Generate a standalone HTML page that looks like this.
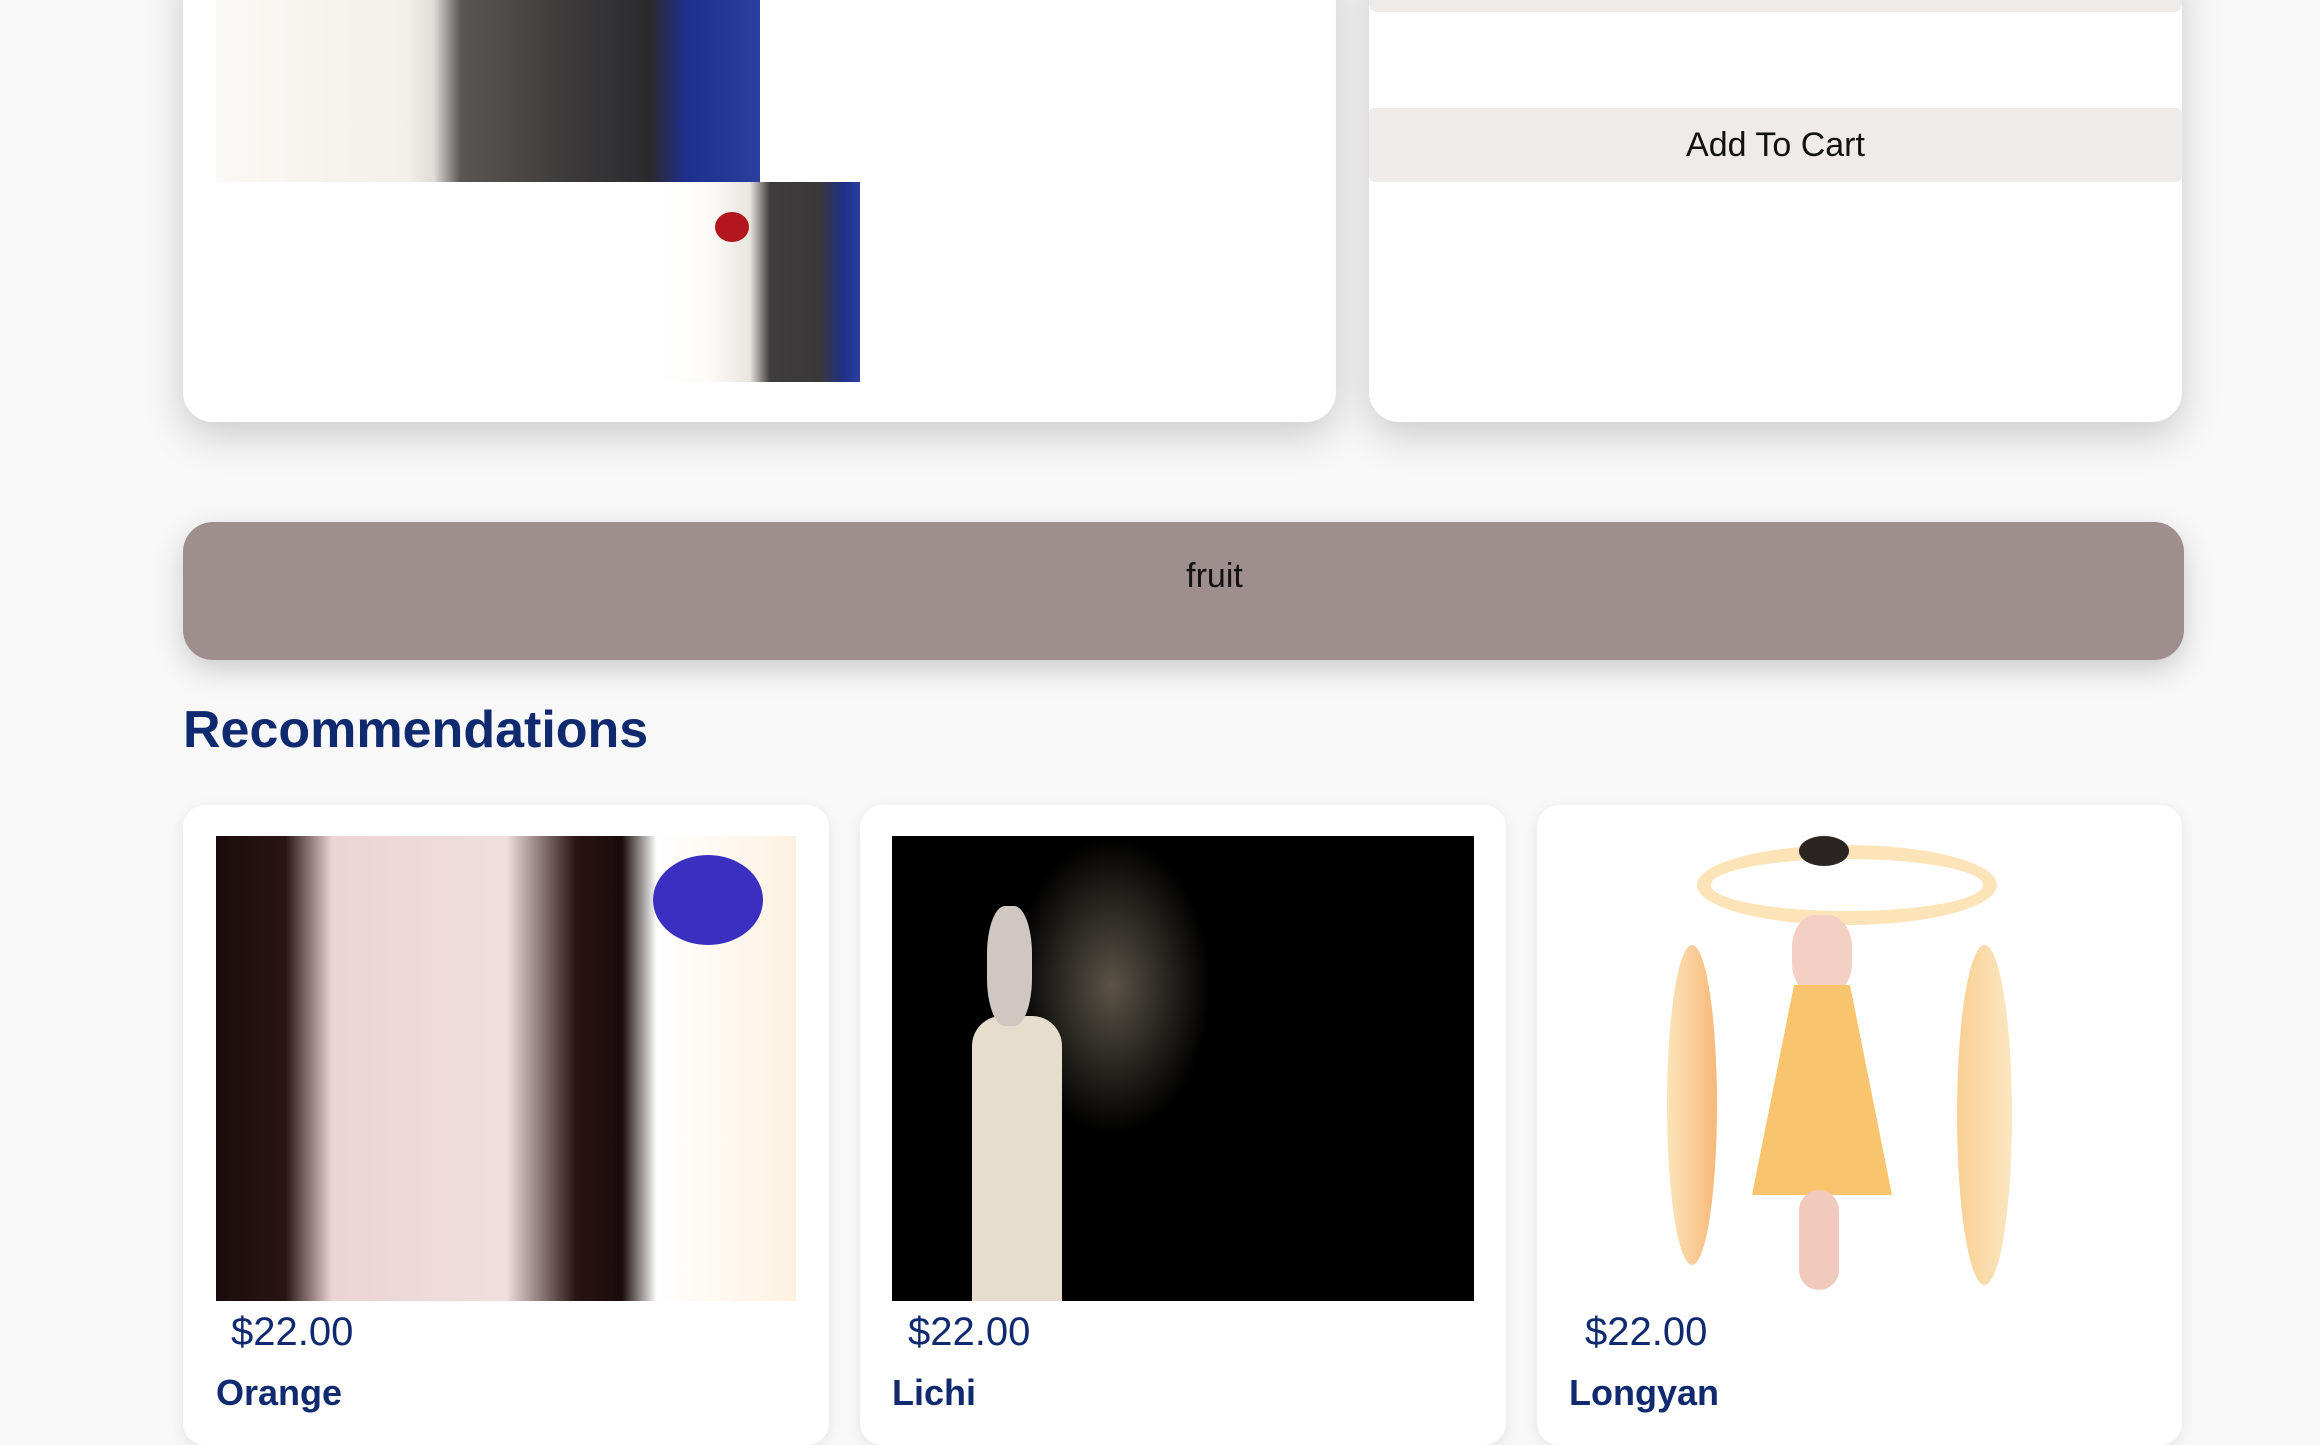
<!DOCTYPE html>
<html><head><meta charset="utf-8"><style>
*{margin:0;padding:0;box-sizing:border-box}
body{width:2320px;height:1408px;overflow:hidden;background:#f8f8f8;font-family:"Liberation Sans",sans-serif;position:relative}
.abs{position:absolute}
.card{background:#fff;border-radius:0 0 30px 30px;box-shadow:0 14px 40px rgba(0,0,0,.18)}
.rc{background:#fff;border-radius:22px;box-shadow:0 4px 14px rgba(0,0,0,.08);overflow:hidden}
.price{font-size:40px;color:#0f2a6e}
.name{font-size:36px;font-weight:bold;color:#0f2a6e}
</style></head><body>
<div class="abs card" style="left:183px;top:-40px;width:1153px;height:462px"></div>
<div class="abs card" style="left:1369px;top:-40px;width:813px;height:462px"></div>
<div class="abs" style="left:216px;top:0;width:544px;height:182px;background:linear-gradient(90deg,#fbf9f5 0%,#f3efea 35%,#e0dcd8 40%,#5a5654 45%,#3c3a3a 65%,#2a2a2e 80%,#1e2f8a 86%,#2b3fa0 100%)"></div>
<div class="abs" style="left:660px;top:182px;width:200px;height:200px;background:linear-gradient(90deg,#fff 0%,#fdfbf8 25%,#e8e4e0 45%,#3e3c3c 55%,#3a3838 80%,#1f2f88 92%,#2b3fa0 100%)"></div>
<div class="abs" style="left:715px;top:212px;width:34px;height:30px;border-radius:50%;background:#b3161c"></div>
<div class="abs" style="left:1369px;top:0;width:813px;height:12px;background:#eeebea;border-radius:0 0 8px 8px"></div>
<div class="abs" style="left:1369px;top:108px;width:813px;height:74px;background:#eeebea;border-radius:6px;display:flex;align-items:center;justify-content:center;font-size:34px;color:#111">Add To Cart</div>
<div class="abs" style="left:183px;top:522px;width:2001px;height:138px;background:#9e8e8d;border-radius:30px;box-shadow:0 10px 30px rgba(0,0,0,.18);display:flex;justify-content:center;padding-top:35px;padding-left:62px;font-size:34px;color:#111">fruit</div>
<div class="abs" style="left:183px;top:700px;font-size:52px;font-weight:bold;color:#0f2a6e">Recommendations</div>
<div class="abs rc" style="left:183px;top:805px;width:646px;height:640px">
 <div class="abs" style="left:33px;top:31px;width:580px;height:465px;background:linear-gradient(90deg,#1a0c0c 0%,#2a1414 12%,#ecd3d4 20%,#f2dede 50%,#2a1414 62%,#1a0c0c 70%,#fff 76%,#fdf1e0 100%)"></div>
 <div class="abs" style="left:470px;top:50px;width:110px;height:90px;border-radius:50%;background:#3a2fc0"></div>
 <div class="abs price" style="left:48px;top:505px">$22.00</div>
 <div class="abs name" style="left:33px;top:567px">Orange</div>
</div>
<div class="abs rc" style="left:860px;top:805px;width:646px;height:640px">
 <div class="abs" style="left:32px;top:31px;width:582px;height:465px;background:#000;overflow:hidden">
  <div class="abs" style="left:120px;top:0;width:200px;height:300px;background:radial-gradient(ellipse,#5a5447 0%,rgba(0,0,0,0) 70%)"></div>
  <div class="abs" style="left:80px;top:180px;width:90px;height:290px;background:#e6ddcd;border-radius:30px 30px 0 0"></div>
  <div class="abs" style="left:95px;top:70px;width:45px;height:120px;background:#cfc8c2;border-radius:40%"></div>
 </div>
 <div class="abs price" style="left:48px;top:505px">$22.00</div>
 <div class="abs name" style="left:32px;top:567px">Lichi</div>
</div>
<div class="abs rc" style="left:1537px;top:805px;width:645px;height:640px">
 <div class="abs" style="left:160px;top:40px;width:300px;height:80px;border:14px solid #fbd89a;border-radius:50%;opacity:.7"></div>
 <div class="abs" style="left:130px;top:140px;width:50px;height:320px;background:linear-gradient(90deg,#fbd89a,#f29a40);border-radius:50%;opacity:.7"></div>
 <div class="abs" style="left:420px;top:140px;width:55px;height:340px;background:linear-gradient(90deg,#f7c47a,#fbe0b0);border-radius:50%;opacity:.8"></div>
 <div class="abs" style="left:255px;top:110px;width:60px;height:80px;background:#f4cfc4;border-radius:40%"></div>
 <div class="abs" style="left:215px;top:180px;width:140px;height:210px;background:#f8c46e;clip-path:polygon(30% 0,70% 0,100% 100%,0 100%)"></div>
 <div class="abs" style="left:262px;top:385px;width:40px;height:100px;background:#f1cabd;border-radius:20px"></div>
 <div class="abs" style="left:262px;top:31px;width:50px;height:30px;background:#2a2422;border-radius:50%"></div>
 <div class="abs price" style="left:48px;top:505px">$22.00</div>
 <div class="abs name" style="left:32px;top:567px">Longyan</div>
</div>
</body></html>
